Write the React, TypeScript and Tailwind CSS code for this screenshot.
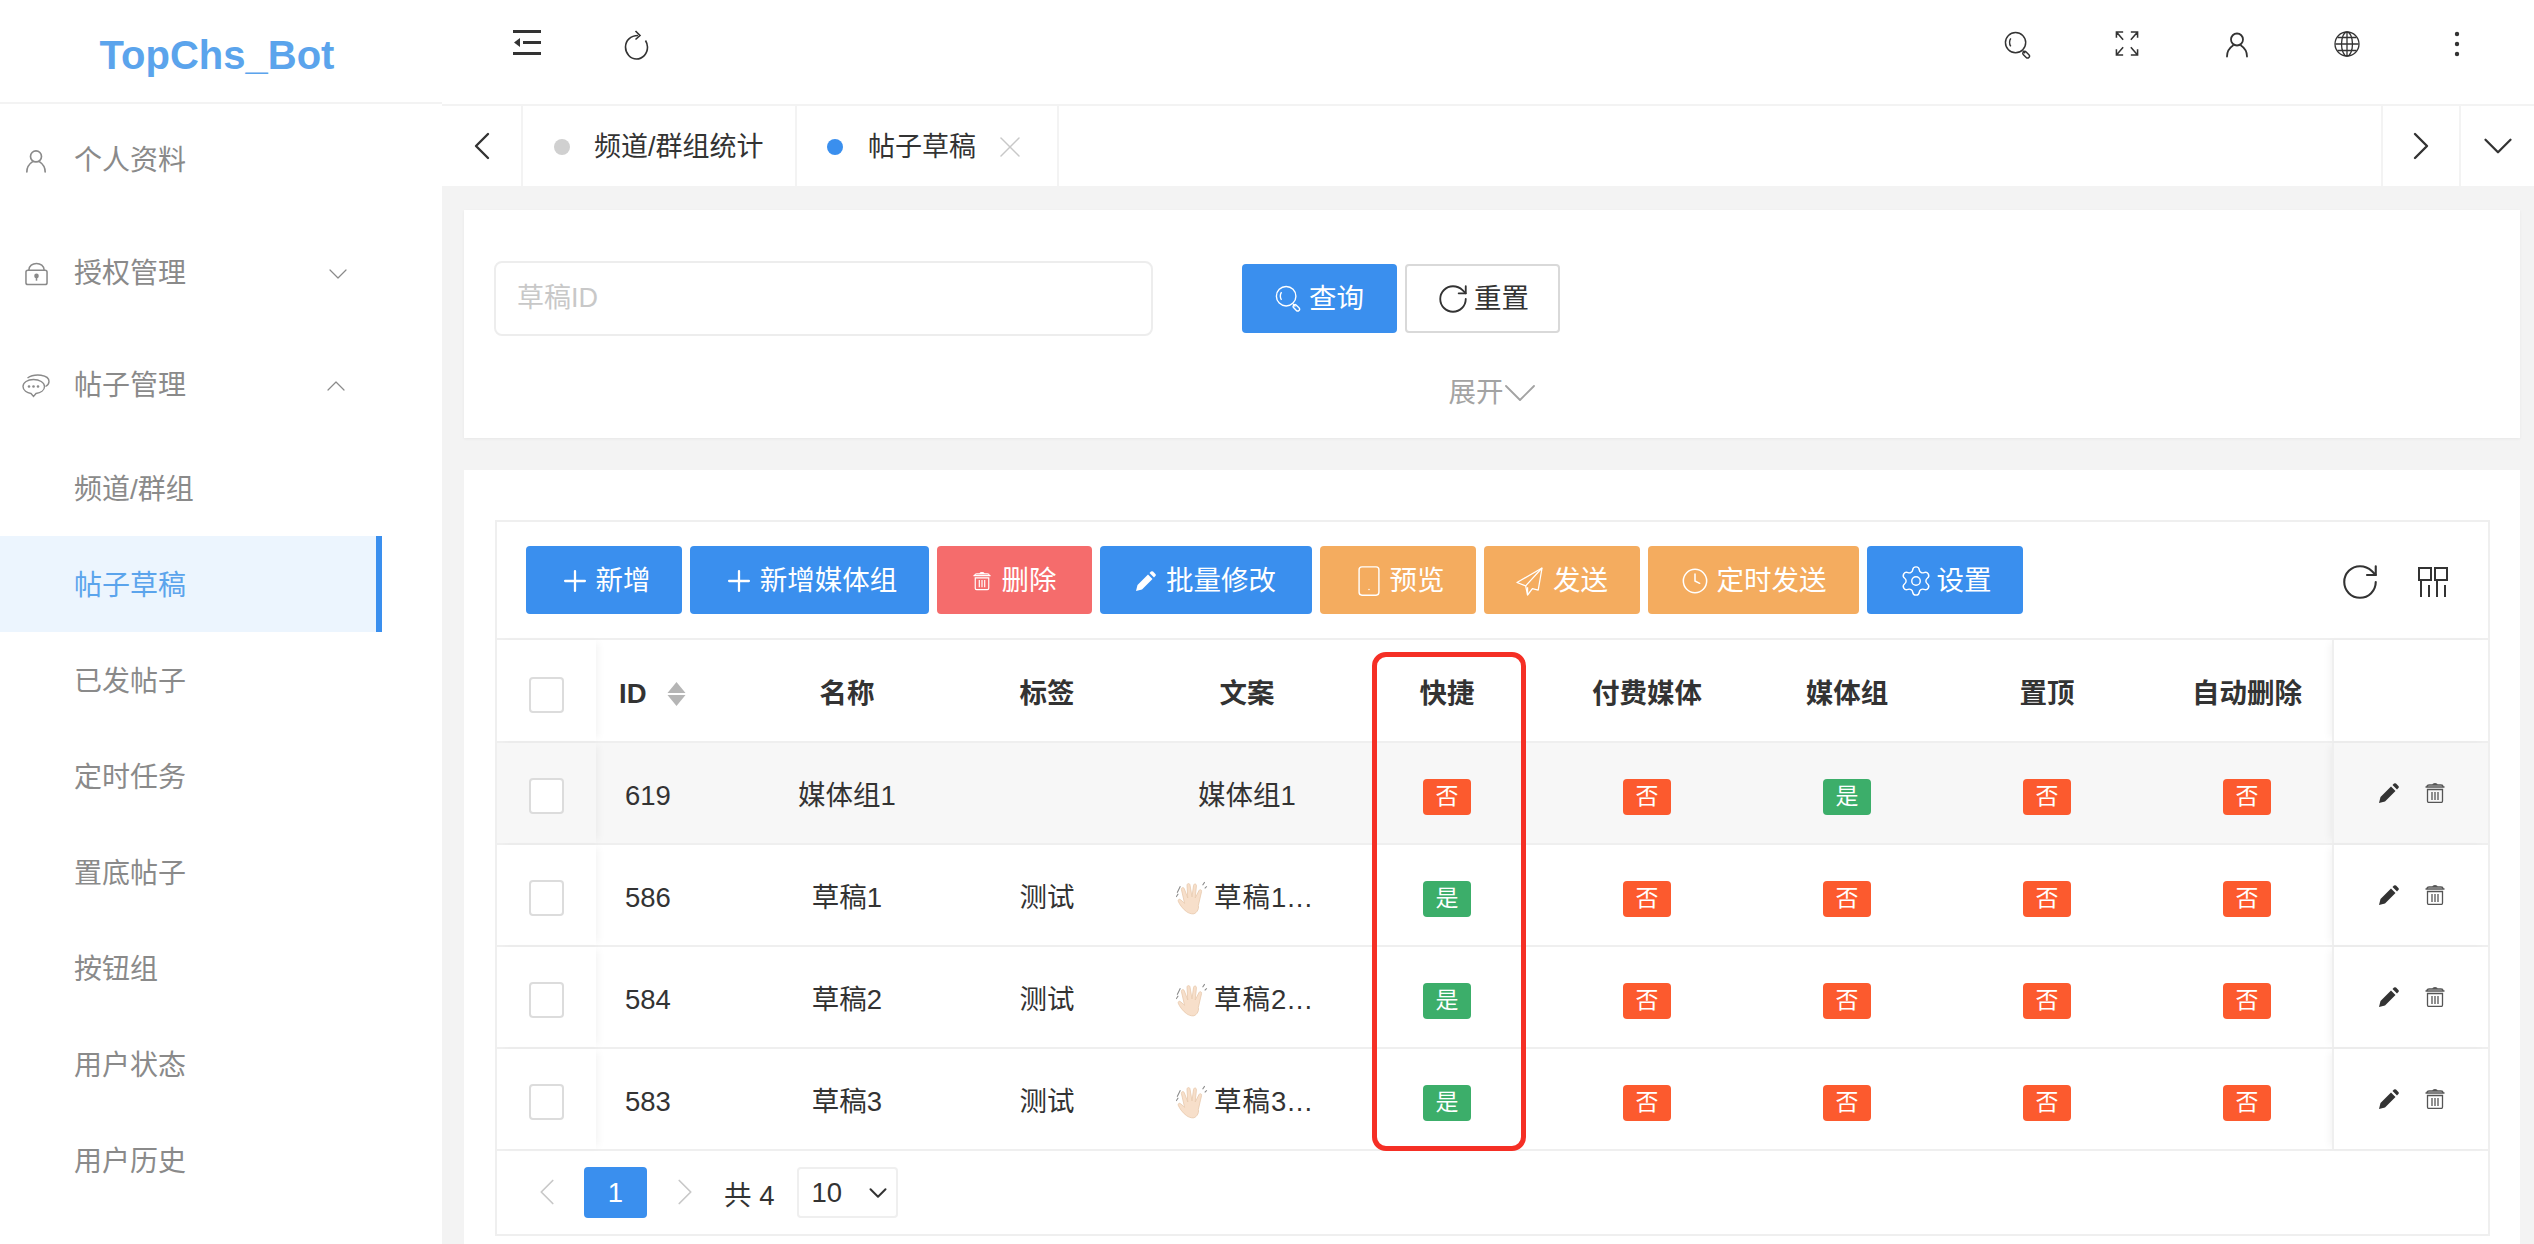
import { ChevronDown, ChevronLeft, ChevronRight, ChevronUp, Clock, Plus, RotateCw, Settings, Smartphone, X } from "lucide-react";

const rows = [
  { id: 619, name: "媒体组1", tag: "", copy: "媒体组1", wave: false, flags: [false, false, true, false, false] },
  { id: 586, name: "草稿1", tag: "测试", copy: "草稿1...", wave: true, flags: [true, false, false, false, false] },
  { id: 584, name: "草稿2", tag: "测试", copy: "草稿2...", wave: true, flags: [true, false, false, false, false] },
  { id: 583, name: "草稿3", tag: "测试", copy: "草稿3...", wave: true, flags: [true, false, false, false, false] },
];

const subMenu = ["频道/群组", "帖子草稿", "已发帖子", "定时任务", "置底帖子", "按钮组", "用户状态", "用户历史"];
const columns = ["名称", "标签", "文案", "快捷", "付费媒体", "媒体组", "置顶"];
const gridCols = "grid grid-cols-[99px_151px_200px_200px_200px_200px_200px_200px_200px_185px_156px]";

function UserIcon({ className }: { className?: string }) {
  return (
    <svg viewBox="0 0 24 26" fill="none" stroke="currentColor" strokeWidth="1.8" strokeLinecap="round" className={className}>
      <circle cx="12" cy="8" r="6" />
      <path d="M2 25c0-6 3-9 6-11M22 25c0-6-3-9-6-11" />
    </svg>
  );
}

function LockIcon() {
  return (
    <svg viewBox="0 0 24 24" fill="none" stroke="currentColor" strokeWidth="1.6" className="w-[23px] h-[24px]">
      <path d="M4 8C4 3.5 8 1 12 1s8 2.5 8 7" />
      <rect x="1" y="8" width="22" height="15" rx="2" />
      <circle cx="12" cy="14" r="1.6" fill="currentColor" />
      <path d="M12 15v4" />
    </svg>
  );
}

function ChatIcon() {
  return (
    <svg viewBox="0 0 28 24" fill="none" stroke="currentColor" strokeWidth="1.4" className="w-[28px] h-[24px] shrink-0">
      <path d="M11.500 5.500C5.500 5.500 1 8.500 1 12.500S5 19 9 19.500l2.500 3 2.500-3c4.500-.5 8.500-3 8.500-7s-5-7-11-7z" />
      <path d="M5.500 4C9 1.500 14 .6 19 1.200c5 .7 8 3.300 8 6.300 0 2-1.300 3.800-3.500 5" />
      <circle cx="7" cy="12.500" r="1.300" fill="currentColor" stroke="none" />
      <circle cx="11.500" cy="12.500" r="1.300" fill="currentColor" stroke="none" />
      <circle cx="16" cy="12.500" r="1.300" fill="currentColor" stroke="none" />
    </svg>
  );
}

function FoldIcon() {
  return (
    <svg viewBox="0 0 28 25" fill="currentColor" className="w-[28px] h-[25px]">
      <rect x="0" y="0" width="28" height="3" />
      <rect x="10" y="11" width="18" height="3" />
      <rect x="0" y="22" width="28" height="3" />
      <path d="M7 8v9l-6-4.500z" />
    </svg>
  );
}

function ThinRefresh({ className }: { className?: string }) {
  return (
    <svg viewBox="0 0 26 30" fill="none" stroke="currentColor" strokeWidth="1.6" className={className}>
      <path d="M14 5.500C6.500 5.500 1.500 10.500 1.500 17c0 6.500 5 12 11 12s11-5 11-12c0-2.500-.8-4.500-2-6.500" />
      <path d="M11.500 1 16 5.500 11.500 9.500" />
    </svg>
  );
}

function SearchIcon({ className }: { className?: string }) {
  return (
    <svg viewBox="0 0 28 30" fill="none" stroke="currentColor" strokeWidth="1.5" className={className}>
      <circle cx="12" cy="12" r="10.500" />
      <path d="M7 7.500C5.500 10 5.500 13.500 7 16" />
      <path d="M19.500 20.500 22 23" />
      <rect x="21" y="20.500" width="4" height="8" rx="2" transform="rotate(-45 23 24.500)" />
    </svg>
  );
}

function ExpandIcon() {
  return (
    <svg viewBox="0 0 24 26" fill="none" stroke="currentColor" strokeWidth="1.6" className="w-[24px] h-[25px]">
      <path d="M1 7V1h7M1 1l7 8M23 7V1h-7M23 1l-7 8M1 19v6h7M1 25l7-8M23 19v6h-7M23 25l-7-8" />
    </svg>
  );
}

function GlobeIcon() {
  return (
    <svg viewBox="0 0 26 26" fill="none" stroke="currentColor" strokeWidth="1.3" className="w-[26px] h-[26px]">
      <circle cx="13" cy="13" r="12" />
      <ellipse cx="13" cy="13" rx="5.500" ry="12" />
      <path d="M13 1v24M1.500 13h23M3.500 6.500h19M3.500 19.500h19" />
    </svg>
  );
}

function DotsIcon() {
  return (
    <svg viewBox="0 0 6 26" fill="currentColor" className="w-[6px] h-[26px]">
      <circle cx="3" cy="3" r="2.200" />
      <circle cx="3" cy="13" r="2.200" />
      <circle cx="3" cy="23" r="2.200" />
    </svg>
  );
}

function PencilIcon({ className }: { className?: string }) {
  return (
    <svg viewBox="0 0 20 20" fill="currentColor" className={className}>
      <path d="M0 20l1.500-6L12 3.500l4.500 4.500L6 18.500z" />
      <path d="M13.500 2 15 .6a1.500 1.500 0 0 1 2 0L19.400 3a1.500 1.500 0 0 1 0 2L18 6.500z" />
    </svg>
  );
}

function TrashIcon({ className }: { className?: string }) {
  return (
    <svg viewBox="0 0 20 20" fill="none" stroke="currentColor" strokeWidth="1.3" className={className}>
      <path d="M.5 4h19M2 4v-.5C2 2.500 3 2 4 2h12c1 0 2 .5 2 1.500V4M7.500 2C8 1 9 .7 10 .7s2 .3 2.500 1.300" />
      <path d="M2.500 6.500v11.500c0 1 .5 1.500 1.500 1.500h12c1 0 1.500-.5 1.500-1.500V6.500z" />
      <path d="M7 9v8M10 9v8M13 9v8" />
    </svg>
  );
}

function SendIcon() {
  return (
    <svg viewBox="0 0 28 30" fill="none" stroke="currentColor" strokeWidth="1.300" strokeLinejoin="round" className="w-[27px] h-[29px]">
      <path d="M27 1 1 16l9 3.500 2 9.500 5-6.500 6 1.500z" />
      <path d="M27 1 10 19.500M12 29v-8" />
    </svg>
  );
}

function ColumnsIcon() {
  return (
    <svg viewBox="0 0 30 30" fill="none" stroke="currentColor" strokeWidth="2" className="w-[30px] h-[30px]">
      <rect x="1" y="1" width="12" height="12" />
      <rect x="17" y="1" width="12" height="12" />
      <path d="M3 13v17M11 18v12M19 13v17M27 18v12M3 18v12" />
    </svg>
  );
}

// no emoji font on the box, so the waving hand is drawn
function WaveIcon() {
  return (
    <svg viewBox="0 0 30 34" className="w-[32px] h-[36px] shrink-0">
      <path
        d="M10 30c-3-2-7-7-8-10-.6-1.500 1.400-2.600 2.400-1.200L8 22 5 9c-.4-1.800 2-2.600 2.700-.8L11 17 10.300 5c-.1-1.900 2.500-2.200 2.800-.3L15 16l1.500-11c.3-1.800 2.800-1.500 2.700.3L18 17l3.600-7c.8-1.600 3-.7 2.400 1L21 24c1 4-2.500 8-5 8-2.300 0-4.500-.9-6-2z"
        fill="#f7dfca"
        stroke="#e8cbb0"
        strokeWidth="0.8"
      />
      <path d="M1 12 4 6M0 16l2-3M25 5l2-3M27 8l2-2" stroke="#8a8a8a" strokeWidth="1" fill="none" />
    </svg>
  );
}

function SortIcon() {
  return (
    <svg viewBox="0 0 20 24" fill="#b5b5b5" className="w-[21px] h-[24px]">
      <path d="M10 0l9 11H1z" />
      <path d="M1 13h18l-9 11z" />
    </svg>
  );
}

function Badge({ yes }: { yes: boolean }) {
  return (
    <span
      className={`mt-[7px] flex h-[36px] w-[48px] items-center justify-center rounded-[4px] text-[23px] text-white ${
        yes ? "bg-[#3cae6a]" : "bg-[#fc5a2e]"
      }`}
    >
      {yes ? "是" : "否"}
    </span>
  );
}

function Checkbox() {
  return <span className="block h-[36px] w-[35px] rounded-[4px] border-2 border-[#dcdcdc] bg-white" />;
}

function ToolButton({ width, color, gap, icon, label }: { width: string; color: string; gap: string; icon: React.ReactNode; label: string }) {
  return (
    <button className={`flex h-[68px] items-center justify-center rounded-[4px] pt-[2px] text-white ${gap} ${width} ${color}`}>
      {icon}
      <span>{label}</span>
    </button>
  );
}

export default function App() {
  return (
    <div className="flex h-[1244px] w-[2534px] overflow-hidden bg-[#f3f3f3] text-[27.5px] text-[#333] [font-family:'Liberation_Sans','Noto_Sans_CJK_SC',sans-serif]">
      <aside className="h-full w-[442px] shrink-0 bg-white text-[28px] text-[#8a8a8a]">
        <div className="flex h-[104px] items-center justify-center border-b-2 border-[#f3f3f3] pr-[8px] pt-[8px] text-[40px] font-bold text-[#5ba4ec]">
          TopChs_Bot
        </div>
        <div className="flex h-[112px] items-center pl-[24px] pt-[2px]">
          <span className="flex w-[24px] justify-center"><UserIcon className="w-[22px] h-[24px]" /></span>
          <span className="ml-[26px]">个人资料</span>
        </div>
        <div className="flex h-[112px] w-[354px] items-center pl-[24px] pt-[3px]">
          <span className="flex w-[24px] justify-center"><LockIcon /></span>
          <span className="ml-[26px]">授权管理</span>
          <ChevronDown className="ml-auto w-[32px] h-[32px]" strokeWidth={0.9} />
        </div>
        <div className="flex h-[112px] w-[354px] items-center pl-[24px] pt-[3px]">
          <span className="flex w-[24px] justify-center"><ChatIcon /></span>
          <span className="ml-[26px]">帖子管理</span>
          <ChevronUp className="ml-auto mr-[2px] w-[32px] h-[32px]" strokeWidth={0.9} />
        </div>
        {subMenu.map((item) =>
          item === "帖子草稿" ? (
            <div key={item} className="flex h-[96px] w-[382px] items-center border-r-[6px] border-[#3a8fee] bg-[#ecf5fe] pl-[74px] pt-[4px] text-[#5ba4ec]">
              {item}
            </div>
          ) : (
            <div key={item} className="flex h-[96px] items-center pl-[74px] pt-[4px]">
              {item}
            </div>
          )
        )}
      </aside>

      <main className="flex min-w-0 flex-1 flex-col">
        <header className="flex h-[106px] shrink-0 items-center justify-between border-b-2 border-[#f3f3f3] bg-white pb-[14px] pl-[30px] pr-[22px] text-[#333]">
          <div className="flex">
            <span className="flex w-[110px] justify-center"><FoldIcon /></span>
            <span className="flex w-[109px] justify-center"><ThinRefresh className="w-[26px] h-[30px]" /></span>
          </div>
          <div className="flex">
            <span className="flex w-[110px] justify-center"><SearchIcon className="w-[27px] h-[29px]" /></span>
            <span className="flex w-[110px] justify-center"><ExpandIcon /></span>
            <span className="flex w-[110px] justify-center"><UserIcon className="w-[24px] h-[27px]" /></span>
            <span className="flex w-[110px] justify-center"><GlobeIcon /></span>
            <span className="flex w-[110px] justify-center"><DotsIcon /></span>
          </div>
        </header>

        <div className="flex h-[80px] shrink-0 items-center bg-white">
          <div className="flex h-full w-[81px] items-center justify-center border-r-2 border-[#f3f3f3]">
            <ChevronLeft className="w-[48px] h-[48px]" strokeWidth={1.2} />
          </div>
          <div className="flex h-full w-[274px] items-center gap-[24px] border-r-2 border-[#f3f3f3] pl-[31px] pt-[2px] text-[27px]">
            <span className="h-[16px] w-[16px] rounded-full bg-[#d0d0d0]" />
            频道/群组统计
          </div>
          <div className="flex h-full w-[262px] items-center border-r-2 border-[#f3f3f3] pl-[30px] pt-[2px] text-[27px]">
            <span className="h-[16px] w-[16px] rounded-full bg-[#3a8fee]" />
            <span className="ml-[25px]">帖子草稿</span>
            <X className="ml-[16px] w-[36px] h-[36px] text-[#c8c8c8]" strokeWidth={1} />
          </div>
          <div className="flex-1" />
          <div className="flex h-full w-[80px] items-center justify-center border-x-2 border-[#f3f3f3]">
            <ChevronRight className="w-[48px] h-[48px]" strokeWidth={1.2} />
          </div>
          <div className="flex h-full w-[73px] items-center justify-center">
            <ChevronDown className="w-[50px] h-[50px]" strokeWidth={1.1} />
          </div>
        </div>

        <section className="ml-[22px] mr-[14px] mt-[24px] h-[228px] shrink-0 bg-white pl-[30px] pt-[51px] shadow-[0_1px_3px_rgba(0,0,0,0.05)]">
          <div className="flex items-center">
            <div className="flex h-[75px] w-[659px] items-center rounded-[8px] border-2 border-[#ededed] pl-[21px] text-[27px] text-[#c8c8c8]">
              草稿ID
            </div>
            <button className="ml-[89px] flex h-[69px] w-[155px] items-center justify-center gap-[8px] rounded-[4px] bg-[#3a8fee] text-white">
              <SearchIcon className="w-[26px] h-[28px]" />
              查询
            </button>
            <button className="ml-[8px] flex h-[69px] w-[155px] items-center justify-center gap-[4px] rounded-[4px] border-2 border-[#d9d9d9]">
              <RotateCw className="w-[34px] h-[34px]" strokeWidth={1.3} />
              重置
            </button>
          </div>
          <div className="mt-[36px] flex items-center justify-center pr-[30px] text-[#a3a3a3]">
            展开
            <ChevronDown className="-mx-[12px] -my-[12px] w-[56px] h-[56px]" strokeWidth={0.8} />
          </div>
        </section>

        <section className="ml-[22px] mr-[14px] mt-[32px] flex-1 bg-white pl-[31px] pr-[30px] pt-[50px]">
          <div className="relative w-[1995px] border-x-2 border-y-2 border-[#efefef]">
            <div className="flex h-[118px] items-start border-b-2 border-[#efefef] pl-[29px] pt-[24px]">
              <div className="flex gap-[8px]">
                <ToolButton width="w-[156px]" color="bg-[#3a8fee]" gap="gap-[4px]" icon={<Plus className="w-[34px] h-[34px]" strokeWidth={1.6} />} label="新增" />
                <ToolButton width="w-[239px]" color="bg-[#3a8fee]" gap="gap-[4px]" icon={<Plus className="w-[34px] h-[34px]" strokeWidth={1.6} />} label="新增媒体组" />
                <ToolButton width="w-[155px]" color="bg-[#f56c6c]" gap="gap-[11px]" icon={<TrashIcon className="w-[18px] h-[20px]" />} label="删除" />
                <ToolButton width="w-[212px]" color="bg-[#3a8fee]" gap="gap-[10px]" icon={<PencilIcon className="w-[20px] h-[20px]" />} label="批量修改" />
                <ToolButton width="w-[156px]" color="bg-[#f4ac5f]" gap="gap-[4px]" icon={<Smartphone className="w-[34px] h-[34px]" strokeWidth={1} />} label="预览" />
                <ToolButton width="w-[156px]" color="bg-[#f4ac5f]" gap="gap-[10px]" icon={<SendIcon />} label="发送" />
                <ToolButton width="w-[211px]" color="bg-[#f4ac5f]" gap="gap-[8px]" icon={<Clock className="w-[28px] h-[28px]" strokeWidth={1.3} />} label="定时发送" />
                <ToolButton width="w-[156px]" color="bg-[#3a8fee]" gap="gap-[4px]" icon={<Settings className="w-[34px] h-[34px]" strokeWidth={1} />} label="设置" />
              </div>
              <div className="ml-auto flex h-[68px] items-center gap-[37px] pr-[40px] pt-[4px]">
                <RotateCw className="w-[42px] h-[42px]" strokeWidth={1.2} />
                <ColumnsIcon />
              </div>
            </div>

            <div className={`${gridCols} h-[103px] items-center border-b-2 border-[#efefef] font-semibold`}>
              <div className="relative z-10 flex h-full items-center justify-center bg-white pt-[8px] shadow-[5px_0_8px_-3px_rgba(0,0,0,0.05)]">
                <Checkbox />
              </div>
              <div className="flex items-center gap-[19px] pl-[23px] pt-[6px]">
                ID
                <SortIcon />
              </div>
              {columns.map((col) => (
                <div key={col} className="pt-[6px] text-center">{col}</div>
              ))}
              <div className="w-[200px] pt-[6px] text-center">自动删除</div>
              <div className="relative z-10 h-full border-l-2 border-[#efefef] bg-white shadow-[-5px_0_8px_-3px_rgba(0,0,0,0.05)]" />
            </div>

            {rows.map((row, i) => (
              <div
                key={row.id}
                className={`${gridCols} h-[102px] items-center border-b-2 border-[#efefef] ${i === 0 ? "bg-[#f7f7f7]" : "bg-white"}`}
              >
                <div className={`relative z-10 flex h-full items-center justify-center pt-[6px] shadow-[5px_0_8px_-3px_rgba(0,0,0,0.05)] ${i === 0 ? "bg-[#f7f7f7]" : "bg-white"}`}>
                  <Checkbox />
                </div>
                <div className="pl-[29px] pt-[6px]">{row.id}</div>
                <div className="pt-[6px] text-center">{row.name}</div>
                <div className="pt-[6px] text-center">{row.tag}</div>
                <div className={`flex items-center justify-center gap-[6px] pt-[6px] ${row.wave ? "pr-[5px] tracking-[1px]" : ""}`}>
                  {row.wave && <WaveIcon />}
                  {row.copy}
                </div>
                {row.flags.slice(0, 4).map((yes, j) => (
                  <div key={j} className="flex justify-center">
                    <Badge yes={yes} />
                  </div>
                ))}
                <div className="flex w-[200px] justify-center">
                  <Badge yes={row.flags[4]} />
                </div>
                <div className={`relative z-10 flex h-full items-center gap-[26px] border-l-2 border-[#efefef] pl-[45px] text-[#333] shadow-[-5px_0_8px_-3px_rgba(0,0,0,0.05)] ${i === 0 ? "bg-[#f7f7f7]" : "bg-white"}`}>
                  <PencilIcon className="w-[20px] h-[20px]" />
                  <TrashIcon className="w-[20px] h-[20px] text-[#555]" />
                </div>
              </div>
            ))}

            <div className="flex h-[83px] items-start pt-[16px]">
              <ChevronLeft className="ml-[27px] mt-[2px] w-[46px] h-[46px] text-[#c8c8c8]" strokeWidth={0.9} />
              <span className="ml-[14px] flex h-[51px] w-[63px] items-center justify-center rounded-[4px] bg-[#3a8fee] text-white">1</span>
              <ChevronRight className="ml-[15px] mt-[2px] w-[46px] h-[46px] text-[#c8c8c8]" strokeWidth={0.9} />
              <span className="ml-[16px] mt-[8px]">共 4</span>
              <div className="ml-[23px] flex h-[51px] w-[101px] items-center justify-between rounded-[4px] border-2 border-[#efefef] pl-[12px] pr-[3px]">
                10
                <ChevronDown className="w-[30px] h-[30px]" strokeWidth={1.6} />
              </div>
            </div>

            <div className="pointer-events-none absolute left-[875px] top-[130px] z-20 h-[499px] w-[154px] rounded-[14px] border-[5px] border-[#f52f25]" />
          </div>
        </section>
      </main>
    </div>
  );
}
